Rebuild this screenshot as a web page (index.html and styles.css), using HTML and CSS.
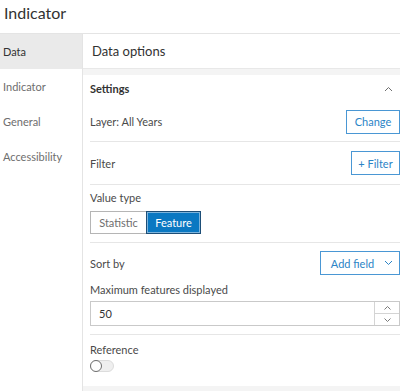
FILE: index.html
```html
<!DOCTYPE html>
<html>
<head>
<meta charset="utf-8">
<link rel="stylesheet" href="styles.css">
</head>
<body>
<div class="app">
  <div class="title">Indicator</div>
  <div class="body">
    <nav class="sidebar">
      <div class="nav-item active">Data</div>
      <div class="nav-item">Indicator</div>
      <div class="nav-item">General</div>
      <div class="nav-item">Accessibility</div>
    </nav>
    <main class="main">
      <div class="main-header">Data options</div>
      <section class="panel">
        <div class="panel-head">
          <span class="panel-title">Settings</span>
          <svg class="chev-up" width="9" height="6" viewBox="0 0 9 6"><path d="M1 5 L4.5 1.5 L8 5" fill="none" stroke="#6e6e6e" stroke-width="1"/></svg>
        </div>
        <div class="row row-layer">
          <span class="label">Layer: All Years</span>
          <button class="btn btn-change">Change</button>
        </div>
        <div class="sep"></div>
        <div class="row row-filter">
          <span class="label">Filter</span>
          <button class="btn btn-filter">+ Filter</button>
        </div>
        <div class="sep"></div>
        <div class="block block-value">
          <div class="label">Value type</div>
          <div class="seg">
            <span class="seg-item">Statistic</span>
            <span class="seg-item selected">Feature</span>
          </div>
        </div>
        <div class="sep"></div>
        <div class="block block-sort">
          <div class="row-sort">
            <span class="label">Sort by</span>
            <button class="btn btn-add">Add field
              <svg class="chev-down" width="9" height="6" viewBox="0 0 9 6"><path d="M1 1 L4.5 4.5 L8 1" fill="none" stroke="#2b84c6" stroke-width="1"/></svg>
            </button>
          </div>
          <div class="label label-max">Maximum features displayed</div>
          <div class="num-input">
            <span class="num-value">50</span>
            <div class="spin">
              <span class="spin-btn"><svg width="9" height="6" viewBox="0 0 9 6"><path d="M1.5 4.5 L4.5 1.5 L7.5 4.5" fill="none" stroke="#7a7a7a" stroke-width="1"/></svg></span>
              <span class="spin-btn"><svg width="9" height="6" viewBox="0 0 9 6"><path d="M1.5 1.5 L4.5 4.5 L7.5 1.5" fill="none" stroke="#7a7a7a" stroke-width="1"/></svg></span>
            </div>
          </div>
        </div>
        <div class="sep"></div>
        <div class="block block-ref">
          <div class="label">Reference</div>
          <div class="toggle"><span class="knob"></span></div>
        </div>
      </section>
    </main>
  </div>
</div>
</body>
</html>
```

FILE: styles.css
```css
* { box-sizing: border-box; }
html, body { margin: 0; padding: 0; }
body {
  width: 400px;
  height: 391px;
  overflow: hidden;
  background: #fff;
  font-family: Lato, "Noto Sans", sans-serif;
  color: #4a4a4a;
}
.app { width: 400px; height: 391px; display: flex; flex-direction: column; }
.title {
  height: 34px;
  padding: 3px 0 0 4px;
  font-size: 16px;
  color: #323232;
  border-bottom: 1px solid #e4e4e4;
}
.body { flex: 1; display: flex; min-height: 0; }
.sidebar {
  width: 83px;
  flex: none;
  border-right: 1px solid #e4e4e4;
}
.nav-item {
  height: 35px;
  display: flex;
  align-items: center;
  padding-left: 3px;
  font-size: 11px;
  color: #6e6e6e;
}
.nav-item.active { background: #eaeaea; color: #323232; }
.main {
  flex: 1;
  background: #f4f4f4;
  display: flex;
  flex-direction: column;
  gap: 6px;
}
.main-header {
  height: 35px;
  flex: none;
  background: #fff;
  border-bottom: 1px solid #e8e8e8;
  display: flex;
  align-items: center;
  padding-left: 9px;
  font-size: 13px;
  color: #323232;
}
.panel {
  background: #fff;
  height: 311px;
  flex: none;
  padding-left: 7px;
}
.panel-head {
  height: 27px;
  display: flex;
  align-items: center;
  justify-content: space-between;
  padding-right: 7px;
}
.panel-title { font-size: 11px; font-weight: 700; color: #323232; }
.label { font-size: 11px; color: #4a4a4a; }
.row {
  display: flex;
  align-items: center;
  justify-content: space-between;
}
.row-layer { height: 39px; }
.row-filter { height: 42px; }
.sep { height: 1px; background: #e6e6e6; }
.btn {
  font-family: inherit;
  font-size: 11px;
  color: #2b84c6;
  background: #fff;
  border: 1px solid #4a97d4;
  height: 24px;
  padding: 0;
  display: inline-flex;
  align-items: center;
  justify-content: center;
}
.btn-change { width: 54px; }
.btn-filter { width: 49px; }
.btn-add { width: 80px; gap: 10px; padding-left: 4px; }
.block-value { height: 57px; padding-top: 6px; }
.seg { display: flex; margin-top: 7px; }
.seg-item {
  height: 23px;
  display: flex;
  align-items: center;
  justify-content: center;
  font-size: 11px;
  border: 1px solid #b5b5b5;
  color: #6e6e6e;
}
.seg-item:first-child { width: 56px; border-right: none; }
.seg-item.selected {
  width: 55px;
  background: #0a78c2;
  color: #fff;
  border: 1px solid #1d4e77;
  box-shadow: inset 0 0 0 1px #7db4dc;
}
.block-sort { height: 91px; padding-top: 8px; }
.row-sort { display: flex; align-items: center; justify-content: space-between; }
.label-max { margin-top: 8px; }
.num-input {
  margin-top: 5px;
  height: 25px;
  border: 1px solid #c9c9c9;
  display: flex;
  align-items: center;
  justify-content: space-between;
}
.num-value { font-size: 11px; padding-left: 8px; color: #323232; }
.spin {
  width: 25px;
  height: 100%;
  border-left: 1px solid #d4d4d4;
  display: flex;
  flex-direction: column;
}
.spin-btn {
  flex: 1;
  display: flex;
  align-items: center;
  justify-content: center;
}
.spin-btn + .spin-btn { border-top: 1px solid #d4d4d4; }
.block-ref { padding-top: 8px; }
.toggle {
  margin-top: 4px;
  width: 24px;
  height: 12px;
  border-radius: 6px;
  background: #efefef;
  border: 1px solid #dcdcdc;
  position: relative;
}
.knob {
  position: absolute;
  left: -1px;
  top: -1px;
  width: 12px;
  height: 12px;
  border-radius: 50%;
  background: #fff;
  border: 1.5px solid #6e6e6e;
}
```
